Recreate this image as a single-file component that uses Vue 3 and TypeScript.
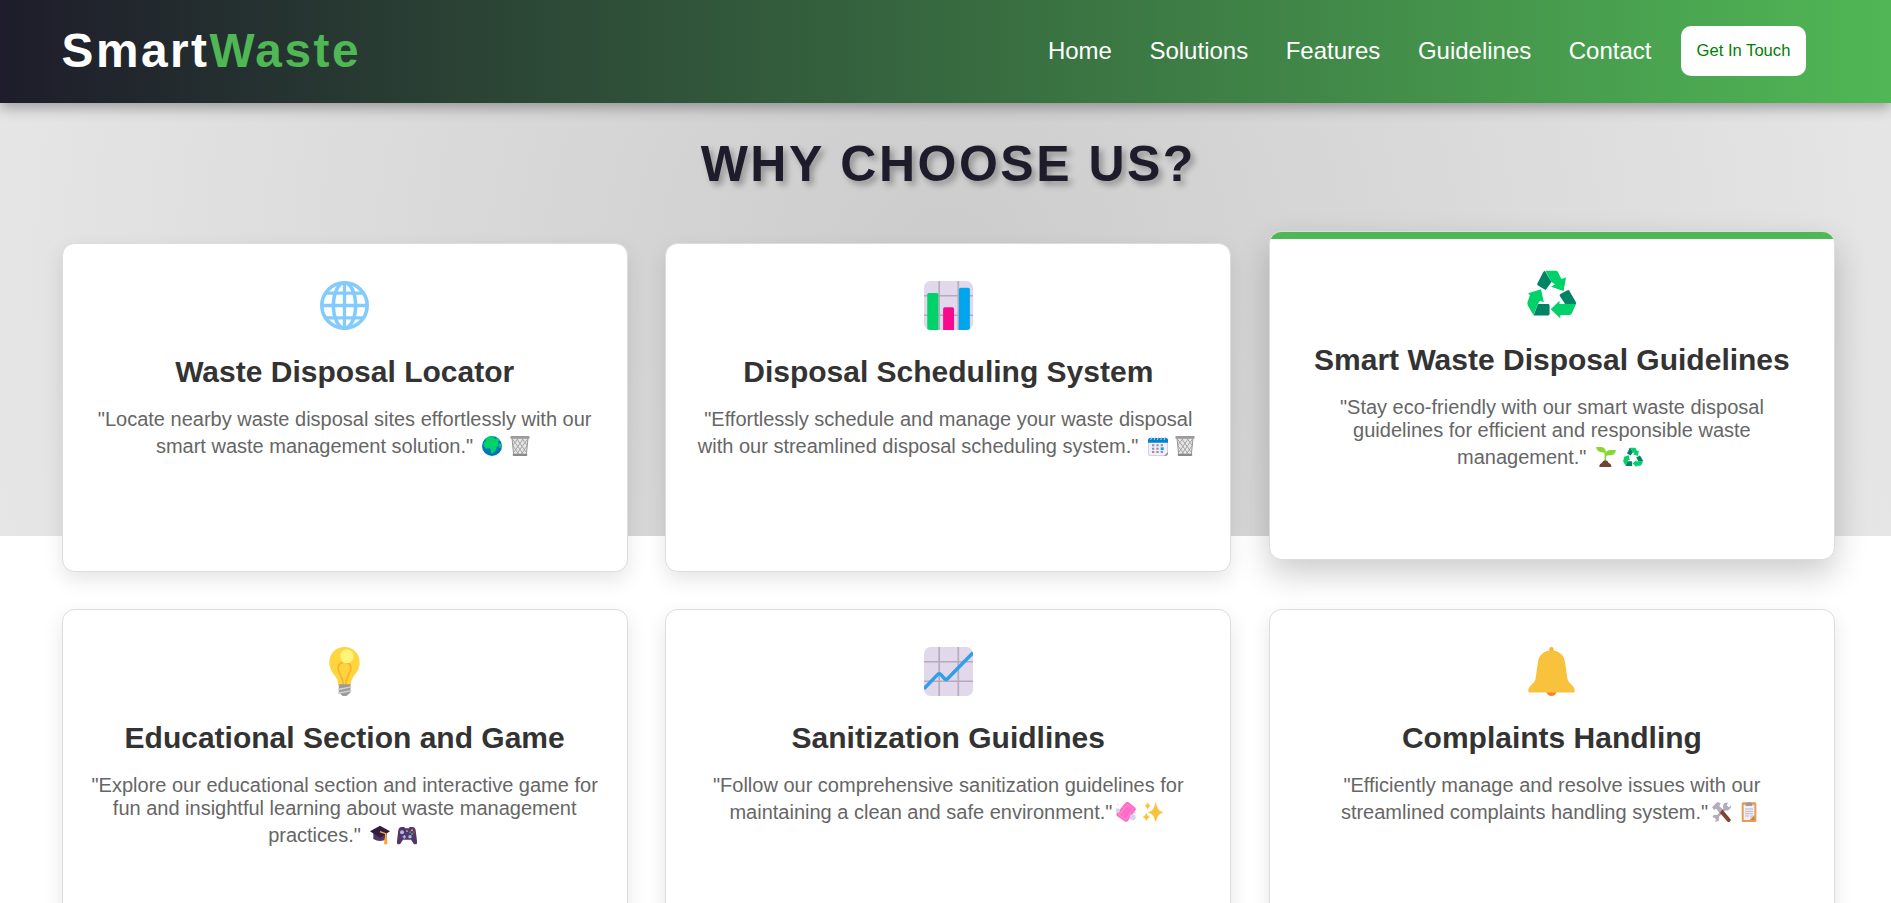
<script setup lang="ts">
interface Feature {
  icon: string
  title: string
  lines: string[]
  spaced: boolean
  marks: string[]
  active?: boolean
}

const links: string[] = ['Home', 'Solutions', 'Features', 'Guidelines', 'Contact']

const features: Feature[] = [
  {
    icon: 'globe',
    title: 'Waste Disposal Locator',
    lines: ['"Locate nearby waste disposal sites effortlessly with our', 'smart waste management solution."'],
    spaced: true,
    marks: ['earth', 'bin'],
  },
  {
    icon: 'bars',
    title: 'Disposal Scheduling System',
    lines: ['"Effortlessly schedule and manage your waste disposal', 'with our streamlined disposal scheduling system."'],
    spaced: true,
    marks: ['calendar', 'bin'],
  },
  {
    icon: 'recycle',
    title: 'Smart Waste Disposal Guidelines',
    lines: ['"Stay eco-friendly with our smart waste disposal', 'guidelines for efficient and responsible waste', 'management."'],
    spaced: true,
    marks: ['sprout', 'recycle'],
    active: true,
  },
  {
    icon: 'bulb',
    title: 'Educational Section and Game',
    lines: ['"Explore our educational section and interactive game for', 'fun and insightful learning about waste management', 'practices."'],
    spaced: true,
    marks: ['cap', 'gamepad'],
  },
  {
    icon: 'trend',
    title: 'Sanitization Guidlines',
    lines: ['"Follow our comprehensive sanitization guidelines for', 'maintaining a clean and safe environment."'],
    spaced: false,
    marks: ['soap', 'sparkles'],
  },
  {
    icon: 'bell',
    title: 'Complaints Handling',
    lines: ['"Efficiently manage and resolve issues with our', 'streamlined complaints handling system."'],
    spaced: false,
    marks: ['tools', 'clipboard'],
  },
]
</script>

<template>
  <div class="page">
    <svg class="sprite" aria-hidden="true">
      <symbol id="globe" viewBox="1 1 30 30">
        <g fill="none" stroke="#83cbff" stroke-width="2.2">
          <circle cx="16" cy="16" r="13.9" />
          <ellipse cx="16" cy="16" rx="6.8" ry="13.9" />
          <path d="M16 2v28M2 16h28M4 8.4h24M4 23.6h24" stroke-width="2" />
        </g>
      </symbol>
      <symbol id="bars" viewBox="1 1 30 30">
        <rect x="1" y="1" width="30" height="30" rx="4" fill="#e1d8ec" />
        <path d="M10.3 1v30M22 1v30M1 10h30M1 22h30" stroke="#b4acbc" stroke-width="1" />
        <path d="M3 9.3q0-1 1-1h4.8q1 0 1 1V31H5q-2 0-2-1z" fill="#00d26a" />
        <path d="M12.7 18.1q0-1 1-1h4.7q1 0 1 1V31h-6.7z" fill="#f70a8d" />
        <path d="M22.4 6.2q0-1 1-1h4.7q1 0 1 1V30q0 1-2 1h-4.7z" fill="#00a6ed" />
      </symbol>
      <symbol id="trend" viewBox="1 1 30 30">
        <rect x="1" y="1" width="30" height="30" rx="4" fill="#e1d8ec" />
        <path d="M10.3 1v30M22 1v30M1 10h30M1 22h30" stroke="#b4acbc" stroke-width="1" />
        <path d="M1 26.6 9.4 17.8q.9-.9 1.8 0L13.6 20.4q.9.9 1.8 0L31 4.5" fill="none" stroke="#2f9fe9" stroke-width="2.1" />
      </symbol>
      <symbol id="recycle" viewBox="1 1 30 30">
        <g fill="#00d26a">
          <path d="M12.2 2h6.4q1 0 1.4.9l2 4.2 2.9-.9-1.5 8.3-7.6-2.6 2.3-1.5L16 9z" />
          <path d="m1.7 15.9 7.9-2.5 1.7 8-2.3-.9-1.4 2.1-2.7 6.6-3.4-5.9q-.4-.9-.2-1.9l1.5-4.3z" />
          <path d="M24.3 22.4h6.7l-2.5 5.7q-.5 1.1-1.7 1.1h-5.4v2l-5.9-5.5 5.4-5.3v2z" />
        </g>
        <g fill="#008463">
          <path d="M12 2.3 16 9l-3.6 4.9-4.7-2.8q-.7-.5-.3-1.4L10.9 3q.4-.7 1.1-.7z" />
          <path d="M7.7 22.4h6.2q.9 0 .9.9v5.2q0 .9-.9.9H5z" />
          <path d="m21.4 16.3 4.4-2.3q.8-.4 1.2.4l3.9 6.8.1 1.2h-6.7l-3.2-4.8q-.4-.8.3-1.3z" />
        </g>
      </symbol>
      <symbol id="bulb" viewBox="1 1 30 30">
        <path d="M16 1c5.4 0 9.3 4.2 9.3 9.4 0 4.7-2.7 7-4.3 9.6-.8 1.3-1 2.7-1.2 4.2h-7.6c-.2-1.5-.4-2.9-1.2-4.2-1.6-2.6-4.3-4.9-4.3-9.6C6.7 5.2 10.6 1 16 1z" fill="#fcd53f" />
        <path d="M15.2 24c0-5.7-3.3-6.5-3.1-10.3.1-2 1.3-3 2.9-3M16.8 24c0-5.7 3.3-6.5 3.1-10.3-.1-2-1.3-3-2.9-3" fill="none" stroke="#ffb02e" stroke-width="1.1" />
        <ellipse cx="17.5" cy="6.7" rx="4.1" ry="4.3" fill="#fff478" />
        <path d="M12.5 23.8h7.2v5L17.2 31h-2.3l-2.4-2.2z" fill="#9b9b9b" />
        <path d="m12 27 8.2-1.6M12 29.3l8.2-1.6" stroke="#d3d3d3" stroke-width=".9" />
      </symbol>
      <symbol id="bell" viewBox="1 1 30 30">
        <circle cx="16" cy="27.8" r="3.2" fill="#ff822d" />
        <path d="M14.7 4.5V2.4Q14.8 1 16 1t1.3 1.4v2.1z" fill="#ffb02e" />
        <path d="M16 3.2c4.9 0 7.7 3 8.3 7.2l1.4 9.6c.2 1.3.7 2.2 1.5 3 2.3 2.3 3 2.9 3 4.9 0 .7-.3 1-.9 1H2.7c-.6 0-.9-.3-.9-1 0-2 .7-2.6 3-4.9.8-.8 1.3-1.7 1.5-3l1.4-9.6C8.3 6.2 11.1 3.2 16 3.2z" fill="#f9c23c" />
      </symbol>
      <symbol id="earth" viewBox="1 1 30 30">
        <circle cx="16" cy="16" r="15" fill="#0074ba" />
        <path d="M7 5C10 2 15 .8 20 2l-2 2 3 1 4-.5 3 3.5-3 1 1 3-2 1 2.5 2-3.500 3-2 5-4 4.500-2.500-1-.5-6-2-1-5 .5-4-4.500 1-5 3-2-1-2z" fill="#00d26a" />
        <path d="m27 12 3 2v4l-2.500 1-1.500-4z" fill="#00d26a" />
      </symbol>
      <symbol id="bin" viewBox="1 1 30 30">
        <path d="M4 4h24l-2.5 25h-19z" fill="#e6e6e6" />
        <path d="m5 6 16 22M11 5l14 20M19 5l8 10M27 6 11 28M21 5 7 25M13 5 5 15M5 15l9 13M27 15l-9 13" fill="none" stroke="#9b9b9b" stroke-width="1.3" />
        <path d="m4 4 2.5 25M28 4l-2.5 25" stroke="#9b9b9b" stroke-width="1.6" />
        <rect x="1.5" y="1" width="29" height="4.2" rx="1.5" fill="#9b9b9b" />
        <rect x="5" y="27.5" width="22" height="3.5" rx="1.5" fill="#8a8a8a" />
      </symbol>
      <symbol id="calendar" viewBox="1 1 30 30">
        <path d="M1 9h30v17l-5 5H5q-4 0-4-4z" fill="#f3eef8" />
        <path d="M1.6 10v17q0 3.4 3.4 3.4h21l4.4-4.4V10" fill="none" stroke="#cdc4d6" stroke-width="1.2" />
        <path d="M31 25v2q0 4-4 4h-2z" fill="#998ea4" />
        <path d="M1 11V7q0-3 3-3h24q3 0 3 3v4z" fill="#0084ce" />
        <path d="m5 7 2-5M10 7l2-5M15 7l2-5M20 7l2-5M25 7l2-5" stroke="#d3c9dc" stroke-width="1.5" />
        <path d="M7 13.500h3.500v3H7zm6.500 0H17v3h-3.500zm6.500 0h3.500v3H20zM7 18.500h3.500v3H7zm6.500 0H17v3h-3.500zM7 23.500h3.500v3H7zm6.500 0H17v3h-3.500zm6.500 0h3.500v3H20z" fill="#998ea4" />
        <rect x="20" y="18" width="4.5" height="4.2" fill="#00a6ed" />
      </symbol>
      <symbol id="sprout" viewBox="1 1 30 30">
        <path d="M15 22V11q0-3-3-5" fill="none" stroke="#86d72f" stroke-width="2.4" />
        <path d="M1 1h7q7 0 8 8-3 1-6 0Q2 8 1 1zM15 12q1-6.5 8-6.5h8q-1 8-9 8-5 0-7 2z" fill="#86d72f" />
        <path d="M6 31q0-5 4-6 1-4 5-4t5 4q4 1 4 6z" fill="#6d4534" />
      </symbol>
      <symbol id="cap" viewBox="1 1 30 30">
        <path d="M6 12v10q10 6 20 0V12z" fill="#533566" />
        <path d="M16 2 31 10.5 16 20 1 10.5z" fill="#321b41" />
        <path d="m16 11 8.5 3v11" fill="none" stroke="#ffb02e" stroke-width="2" />
        <path d="M22.8 20h3.6l.8 10h-5z" fill="#f9a22c" />
      </symbol>
      <symbol id="gamepad" viewBox="1 1 30 30">
        <path d="M8 4h4l1 2h6l1-2h4q4 0 5 5l2 16q1 5-3 5-2 0-4-4l-2-3H10l-2 3q-2 4-4 4-4 0-3-5L3 9q1-5 5-5z" fill="#533566" />
        <circle cx="8.5" cy="12" r="3" fill="#aeb8f0" />
        <circle cx="20.5" cy="18.5" r="2.6" fill="#aeb8f0" />
        <path d="M12 16v5.5M9.3 18.7h5.4" stroke="#aeb8f0" stroke-width="1.8" />
        <circle cx="16" cy="10" r="1.3" fill="#cfc8da" />
        <circle cx="23.5" cy="9" r="1.5" fill="#ffb02e" />
        <circle cx="26.5" cy="12" r="1.5" fill="#f8312f" />
        <circle cx="23.5" cy="14.5" r="1.5" fill="#00d26a" />
        <circle cx="20.8" cy="11.8" r="1.5" fill="#00a6ed" />
      </symbol>
      <symbol id="soap" viewBox="1 1 30 30">
        <path d="M20 1.5 29.500 9q2 1.800.8 4.200L19 29q-2.300 3-5.300 1L3 22.500q-2.300-2-.8-4.500L14.500 3q2.500-3.300 5.500-1.500z" fill="#ff6dc6" />
        <path d="m18 5 8.5 6.5L15.5 27l-10-7z" fill="none" stroke="#ffa3dd" stroke-width="1" />
        <circle cx="3.5" cy="14" r="3.5" fill="#d9d0ec" />
        <circle cx="26" cy="24" r="4.5" fill="#d9d0ec" />
        <circle cx="29" cy="17" r="1.5" fill="#d9d0ec" />
        <circle cx="4" cy="5" r="1.2" fill="#e6dff3" />
      </symbol>
      <symbol id="sparkles" viewBox="1 1 30 30">
        <path d="M20 2q2 8.500 4.500 11t6.500 3.500q-4 1-6.500 3.500T20 30q-2-7.500-4.500-10T9 16.500q4-1 6.500-3.500T20 2zM8 2q.8 3.800 4 4.800-3.200 1-4 4.800-.8-3.800-4-4.800Q7.200 5.800 8 2zM6 18q1 4.500 5 5.500-4 1-5 5.500-1-4.500-5-5.500 4-1 5-5.500z" fill="#f9c23c" stroke="#f9c23c" stroke-width=".8" />
      </symbol>
      <symbol id="tools" viewBox="1 1 30 30">
        <path d="M6 26 24 8" stroke="#b4acbc" stroke-width="4" />
        <path d="M25 2q-5-1-7 3t1 7 7 1 4-7l-4 3-3-3zM2 22q3-3 7-1t2 8q-3 2-6 1l3-3-2-3-3 1z" fill="#b4acbc" />
        <path d="m14 14 12 14" stroke="#7d4533" stroke-width="6" stroke-linecap="round" />
        <path d="m1 9 8-8 5 2-2 4 5 5-4 5-6-6-3 2z" fill="#b4acbc" />
      </symbol>
      <symbol id="clipboard" viewBox="1 1 30 30">
        <rect x="5" y="1.5" width="22" height="29.5" rx="2" fill="#e39d54" />
        <path d="M8 5h16v17l-6 6H8z" fill="#f3eef8" />
        <path d="M24 21v7h-7z" fill="#d67d30" />
        <path d="M24 21h-6v7z" fill="#d3c9dc" />
        <path d="M11 7V3q0-1 1-1h1q3-2 6 0h1q1 0 1 1v4z" fill="#9b9b9b" />
        <path d="M10 11.5h12M10 15h12M10 18.5h12M10 22h6" stroke="#b4acbc" stroke-width="1.3" />
      </symbol>
    </svg>

    <header class="header">
      <div class="logo">Smart<span class="logo-accent">Waste</span></div>
      <nav class="nav">
        <a v-for="link in links" :key="link" class="nav-link">{{ link }}</a>
        <button class="cta" type="button">Get In Touch</button>
      </nav>
    </header>

    <main class="content">
      <h1 class="title">WHY CHOOSE US?</h1>
      <section class="grid">
        <article v-for="f in features" :key="f.title" class="card" :class="{ active: f.active }">
          <svg class="icon"><use :href="'#' + f.icon" /></svg>
          <h2 class="card-title">{{ f.title }}</h2>
          <p class="text">
            <span
              v-for="(line, i) in f.lines"
              :key="i"
              class="line"
              :class="{ last: i === f.lines.length - 1 }"
            >{{ line }}<template v-if="i === f.lines.length - 1"><template v-if="f.spaced">&nbsp;</template><svg v-for="m in f.marks" :key="m" class="mark"><use :href="'#' + m" /></svg></template></span>
          </p>
        </article>
      </section>
    </main>
  </div>
</template>

<style>
body {
  margin: 0;
  background: #fff;
}
</style>

<style scoped>
.page {
  height: 100vh;
  overflow: hidden;
  font-family: "Liberation Sans", Arial, sans-serif;
  background: radial-gradient(circle at center, #ccc, #e6e6e6) top left / 100% 536px no-repeat;
}
.sprite {
  position: absolute;
  width: 0;
  height: 0;
}
.header {
  display: flex;
  align-items: center;
  justify-content: space-between;
  box-sizing: border-box;
  height: 103px;
  padding: 0 85px 1px 61.5px;
  background: linear-gradient(90deg, #1e1c2a, #50b755);
  box-shadow: 0 5px 12.5px rgba(0, 0, 0, 0.3);
}
.logo {
  padding-bottom: 2px;
  font-size: 47.8px;
  font-weight: 700;
  letter-spacing: 2.5px;
  color: #fff;
}
.logo-accent {
  color: #50b755;
}
.nav {
  display: flex;
  align-items: center;
}
.nav-link {
  margin-right: 37.5px;
  font-size: 24px;
  color: #fff;
}
.nav-link:nth-last-child(2) {
  margin-right: 29.5px;
}
.cta {
  width: 125px;
  height: 50px;
  padding: 0;
  border: 0;
  border-radius: 10px;
  background: #fff;
  color: #008000;
  font-family: inherit;
  font-size: 16.6px;
}
.content {
  width: 1773.4px;
  margin-left: 61.6px;
  padding-top: 33px;
}
.title {
  margin: 0 0 50px;
  font-size: 50px;
  line-height: 57px;
  letter-spacing: 2.5px;
  text-align: center;
  color: #1e1c2a;
  text-shadow: 3.75px 3.75px 6.25px rgba(0, 0, 0, 0.3);
}
.grid {
  display: grid;
  grid-template-columns: repeat(3, 1fr);
  grid-auto-rows: 329px;
  gap: 37px 37.5px;
}
.card {
  position: relative;
  box-sizing: border-box;
  padding-top: 37px;
  overflow: hidden;
  border: 1px solid #ddd;
  border-radius: 12.5px;
  background: #fff;
  box-shadow: 0 8px 20px rgba(0, 0, 0, 0.1);
  text-align: center;
}
.card.active {
  transform: translateY(-12px);
  box-shadow: 0 14px 32px rgba(0, 0, 0, 0.2);
}
.card.active::before {
  content: "";
  position: absolute;
  top: 0;
  left: 0;
  width: 100%;
  height: 6.5px;
  background: #50b755;
}
.icon {
  display: block;
  width: 49px;
  height: 49px;
  margin: 0 auto 24px;
}
.card-title {
  margin: 0 0 19px;
  font-size: 30px;
  line-height: 35px;
  color: #333;
}
.text {
  margin: 0;
  font-size: 20px;
  line-height: 23px;
  color: #666;
}
.line {
  display: block;
  height: 23px;
  white-space: nowrap;
}
.line.last {
  margin-top: 4px;
}
.mark {
  width: 20px;
  height: 20px;
  margin: 0 3.7px;
  vertical-align: -3px;
}
</style>
